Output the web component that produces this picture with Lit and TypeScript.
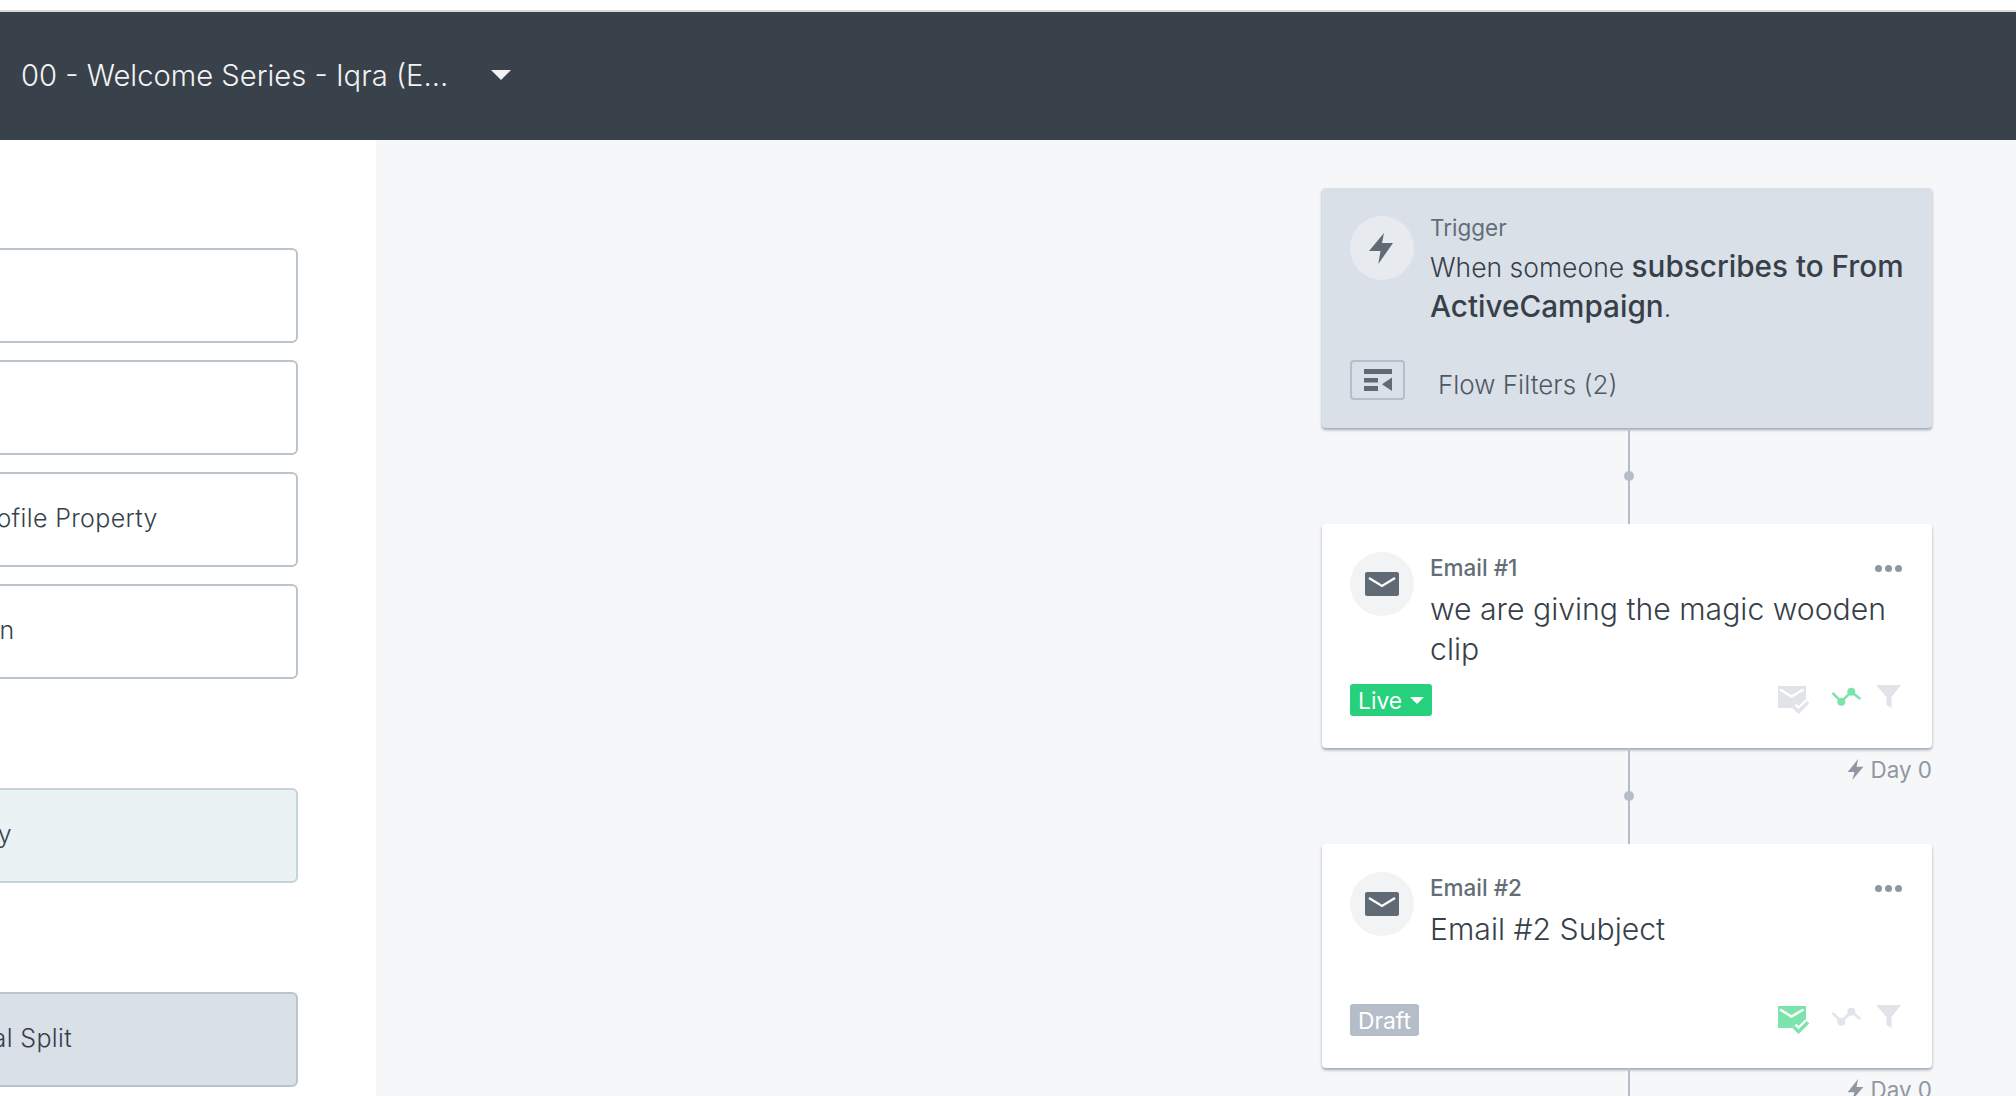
import { LitElement, html, css } from "lit";
import { customElement } from "lit/decorators.js";

const GREEN = "#7de3ad";
const GREY = "#e0e3e7";

const mailCheck = (c: string) => html`<svg class="ic-mail" viewBox="0 0 31 32">
  <rect x="0" y="2" width="28" height="22" fill="${c}"/>
  <path d="M2 5.5L13.5 12.5L25.5 5.5" fill="none" stroke="#fff" stroke-width="2.6"/>
  <path d="M15.5 22.7L20.5 27.7L30 18.3" fill="none" stroke="#fff" stroke-width="8"/>
  <path d="M15.5 22.7L20.5 27.7L30 18.3" fill="none" stroke="${c}" stroke-width="3.4"/>
</svg>`;

const trend = (c: string) => html`<svg class="ic-trend" viewBox="0 0 29 32">
  <path d="M0.5 9L9.3 17.7L19.3 7.7L28.3 15" fill="none" stroke="${c}" stroke-width="2.6"/>
  <circle cx="9.3" cy="17.7" r="4" fill="${c}"/>
  <circle cx="19.3" cy="7.7" r="4" fill="${c}"/>
</svg>`;

const funnel = html`<svg class="ic-funnel" viewBox="0 0 25 32">
  <path d="M0 1H25L15.5 13V24L10.5 21V13Z" fill="${GREY}"/>
</svg>`;

const mailGlyph = html`<svg class="glyph-mail" viewBox="0 0 34 24">
  <rect width="34" height="24" rx="2" fill="#5f6a75"/>
  <path d="M4 6L17 14L30 6" fill="none" stroke="#fff" stroke-width="2.2"/>
</svg>`;

const boltGlyph = html`<svg class="glyph-bolt" viewBox="0 0 24 31">
  <path d="M15 0L0 18H11.5L9.3 31L24 10H13Z" fill="#5f6a75"/>
</svg>`;

const filtersGlyph = html`<svg class="glyph-filters" viewBox="0 0 51 36">
  <g fill="#5f6a75">
    <rect x="12" y="7" width="28" height="5"/>
    <rect x="12" y="16" width="14" height="4.5"/>
    <rect x="12" y="24" width="14" height="5"/>
    <path d="M40 15.5V29L30 22.2Z"/>
  </g>
</svg>`;

const smallBolt = html`<svg class="glyph-small" viewBox="0 0 15 20">
  <path d="M10 0L0 12.5H6.5L4.5 20L15 7.5H8.5Z" fill="#8f98a2"/>
</svg>`;

@customElement("app-root")
export class AppRoot extends LitElement {
  static styles = css`
    :host {
      display: flex;
      flex-direction: column;
      height: 1096px;
      overflow: hidden;
      background: #fff;
      font-family: "Inter", "Lato", sans-serif;
      color: #373f49;
    }
    .topgap { height: 10px; flex: none; background: #fff; border-bottom: 2px solid #d5d7da; }
    .bar {
      flex: none; height: 128px; background: #39414b;
      display: flex; align-items: center; padding-left: 21px;
      color: #f2f3f4; font-size: 29.2px; font-weight: 300;
    }
    .bar span:first-child { position: relative; top: -1px; }
    .caret {
      margin-left: 43px; margin-top: -2px; width: 0; height: 0;
      border-left: 10px solid transparent; border-right: 10px solid transparent;
      border-top: 10px solid #f2f3f4;
    }
    .body { flex: 1; display: flex; min-height: 0; }
    .side {
      flex: none; width: 376px; overflow: hidden; background: #fff;
      padding-top: 108px; box-sizing: border-box;
      display: flex; flex-direction: column;
    }
    .box {
      flex: none; box-sizing: border-box; height: 95px; width: 400px; margin-left: -102px;
      border: 2px solid #b9c4cd; border-radius: 6px; background: #fff;
      display: flex; align-items: center; font-size: 25px; font-weight: 300; color: #373f49;
      letter-spacing: 0.35px; white-space: nowrap; margin-bottom: 17px; overflow: hidden;
    }
    .box span { margin-left: -22px; position: relative; top: -2px; }
    .box.after { margin-top: 92px; }
    .box.teal { background: #eaf2f4; border-color: #c6d3da; }
    .box.slate { background: #d9e0e8; border-color: #b9c4cd; }
    .flow {
      flex: 1; background: #f6f7f9; padding: 48px 0 0 946px; box-sizing: border-box;
      display: flex; flex-direction: column; align-items: flex-start; overflow: hidden;
    }
    .card {
      flex: none; box-sizing: border-box; width: 610px; height: 224px; padding: 28px;
      background: #fff; border-radius: 4px;
      box-shadow: 0 2px 3px rgba(90, 100, 115, 0.55);
      display: flex; flex-direction: column;
    }
    .card.trigger { background: #d9e0e8; height: 240px; }
    .top { display: flex; gap: 16px; flex: none; height: 132px; }
    .circle {
      flex: none; width: 64px; height: 64px; border-radius: 50%; background: #f2f3f5;
      display: flex; align-items: center; justify-content: center;
    }
    .trigger .circle { background: #e7ebef; }
    .glyph-mail { width: 34px; height: 24px; display: block; }
    .glyph-bolt { width: 24px; height: 31px; display: block; margin-left: -3px; }
    .text { flex: 1; min-width: 0; }
    .kicker {
      display: flex; justify-content: space-between; align-items: center;
      height: 32px; font-size: 22.5px; font-weight: 500; color: #636d77;
    }
    .kicker span:first-child { position: relative; top: -1px; }
    .trigger .kicker { margin-top: -4px; font-weight: 400; }
    .subject { font-size: 30.2px; font-weight: 300; line-height: 40px; margin-top: 5px; }
    .trigger .subject { font-size: 26.5px; margin-top: 3px; }
    .subject b { font-size: 29.7px; font-weight: 500; line-height: 1; }
    .dots { display: flex; gap: 3px; margin-right: 2px; }
    .dots i { width: 7px; height: 7px; border-radius: 50%; background: #8f98a2; display: block; }
    .foot { display: flex; align-items: flex-start; }
    .filters { display: flex; align-items: flex-start; margin-top: 12px; }
    .fbtn {
      box-sizing: border-box; width: 55px; height: 40px; border: 2px solid #b5bec8; border-radius: 4px;
      flex: none;
    }
    .glyph-filters { display: block; width: 51px; height: 36px; }
    .ftext { margin-left: 33px; font-size: 26px; font-weight: 300; line-height: 40px; margin-top: 5px; color: #4f5964; }
    .badge {
      height: 32px; border-radius: 3px; color: #fff; font-size: 22.8px;
      display: flex; align-items: center; padding: 0 8px; gap: 8px; box-sizing: border-box;
    }
    .badge.live { background: #26d07c; }
    .badge.draft { background: #b5bec8; }
    .badge .mini {
      width: 0; height: 0;
      border-left: 7px solid transparent; border-right: 7px solid transparent;
      border-top: 7px solid #fff;
    }
    .icons { margin-left: auto; display: flex; margin-right: 3px; }
    .icons svg { display: block; height: 32px; }
    .ic-mail { width: 31px; }
    .ic-trend { width: 29px; margin-left: 23px; }
    .ic-funnel { width: 25px; margin-left: 15px; }
    .link { flex: none; position: relative; width: 610px; height: 96px; }
    .line { width: 2px; height: 100%; margin-left: 306px; background: #b5bec8; }
    .node {
      position: absolute; left: 302px; top: 43px; width: 10px; height: 10px;
      border-radius: 50%; background: #b5bec8;
    }
    .day {
      position: absolute; right: 0; top: 7px; height: 28px;
      display: flex; align-items: center; gap: 7px; font-size: 22.4px; color: #8f98a2;
    }
    .glyph-small { width: 17px; height: 21px; display: block; }
  `;

  private emailCard(title: string, subject: string, draft: boolean) {
    return html`<div class="card">
      <div class="top">
        <div class="circle">${mailGlyph}</div>
        <div class="text">
          <div class="kicker"><span>${title}</span><span class="dots"><i></i><i></i><i></i></span></div>
          <div class="subject">${subject}</div>
        </div>
      </div>
      <div class="foot">
        ${draft
          ? html`<div class="badge draft">Draft</div>`
          : html`<div class="badge live">Live<span class="mini"></span></div>`}
        <div class="icons">
          ${mailCheck(draft ? GREEN : GREY)}
          ${trend(draft ? GREY : GREEN)}
          ${funnel}
        </div>
      </div>
    </div>`;
  }

  private link(day: boolean) {
    return html`<div class="link">
      <div class="line"></div>
      <div class="node"></div>
      ${day ? html`<div class="day">${smallBolt}<span>Day 0</span></div>` : ""}
    </div>`;
  }

  render() {
    return html`
      <div class="topgap"></div>
      <div class="bar"><span>00 - Welcome Series - Iqra (E...</span><span class="caret"></span></div>
      <div class="body">
        <div class="side">
          <div class="box"><span>Email</span></div>
          <div class="box"><span>SMS</span></div>
          <div class="box"><span>Update Profile Property</span></div>
          <div class="box"><span>Notification</span></div>
          <div class="box after teal"><span>Time Delay</span></div>
          <div class="box after slate"><span>Conditional Split</span></div>
        </div>
        <div class="flow">
          <div class="card trigger">
            <div class="top">
              <div class="circle">${boltGlyph}</div>
              <div class="text">
                <div class="kicker"><span>Trigger</span></div>
                <div class="subject">When someone <b>subscribes to From ActiveCampaign</b>.</div>
              </div>
            </div>
            <div class="filters">
              <div class="fbtn">${filtersGlyph}</div>
              <span class="ftext">Flow Filters (2)</span>
            </div>
          </div>
          ${this.link(false)}
          ${this.emailCard("Email #1", "we are giving the magic wooden clip", false)}
          ${this.link(true)}
          ${this.emailCard("Email #2", "Email #2 Subject", true)}
          ${this.link(true)}
        </div>
      </div>
    `;
  }
}
